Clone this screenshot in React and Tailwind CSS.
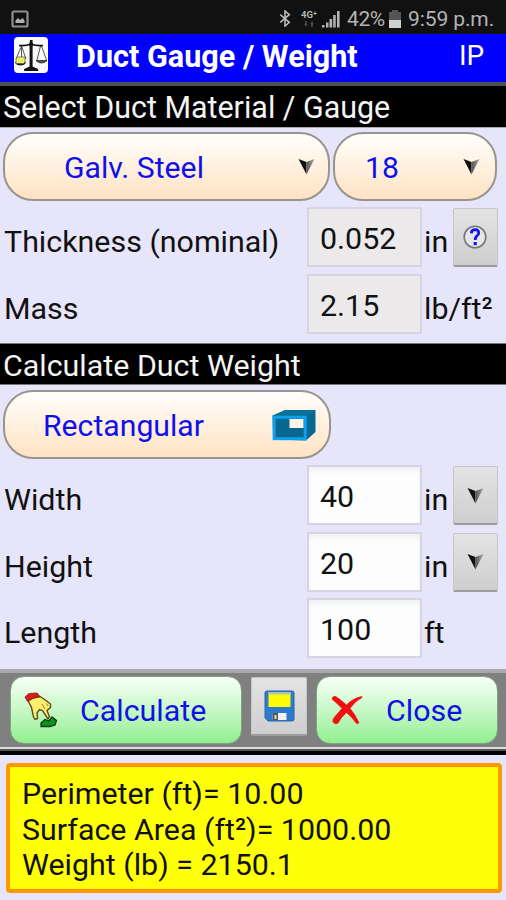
import React from "react";

function Chevron() {
  return (
    <svg className="block h-[17px] w-[17px]" viewBox="0 0 17 17">
      <defs>
        <linearGradient id="chev" x1="0" y1="0" x2="1" y2="0">
          <stop offset="0" stopColor="#555" />
          <stop offset="1" stopColor="#a8a8a8" />
        </linearGradient>
      </defs>
      <path d="M0.5 1 L8.5 4 V16.5 Z" fill="#111" />
      <path d="M16.5 1 L8.5 4 V16.5 Z" fill="url(#chev)" />
    </svg>
  );
}

function StatusBar() {
  return (
    <div className="flex h-[34px] shrink-0 items-center bg-[#111] pt-[3px] text-[#b4b4b4]">
      <svg className="ml-[11px] h-[18px] w-[18px]" viewBox="0 0 18 18">
        <rect x="1.5" y="1.5" width="15" height="15" rx="1.5" fill="#111" stroke="#8f8f8f" strokeWidth="2.2" />
        <path d="M4.5 13 V10.5 L7 8 L9 10 L11.5 8 L13.5 10.5 V13 Z" fill="#b0b0b0" />
      </svg>
      <svg className="ml-[250px] h-[17px] w-[12px]" viewBox="0 0 12 18" fill="none" stroke="#b8b8b8" strokeWidth="1.7">
        <path d="M1 5 L10.5 13 L6 17 V1 L10.5 5 L1 13" />
      </svg>
      <div className="ml-[9px] flex h-[18px] w-[18px] flex-col items-center">
        <span className="text-[9.5px] leading-[9px] font-bold">4G⁺</span>
        <svg className="mt-[2px] h-[6px] w-[10px]" viewBox="0 0 10 6" fill="#444">
          <path d="M0 3 L2 6 L4 3 H3 V0 H1 V3 Z M6 3 L8 0 L10 3 H9 V6 H7 V3 Z" />
        </svg>
      </div>
      <svg className="ml-[4px] h-[18px] w-[18px]" viewBox="0 0 18 18" fill="#b4b4b4">
        <path d="M0 15 h2.5 v2.5 h-2.5z M4 12.5 h2.5 v5 h-2.5z M7.5 9 h2.7 v8.5 h-2.7z M11.2 5 h2.5 v12.5 h-2.5z M15 1 h2.6 v16.5 h-2.6z" />
      </svg>
      <span className="ml-[7px] w-[40px] text-[21px] leading-6 tracking-[-0.4px] whitespace-nowrap">42%</span>
      <svg className="ml-[2px] h-[18px] w-[12px]" viewBox="0 0 12 18">
        <path d="M3 0 h6 v2 h3 v16 h-12 v-16 h3z" fill="#555" />
        <rect y="10" width="12" height="8" fill="#d0d0d0" />
      </svg>
      <span className="ml-[7px] text-[21px] leading-6 tracking-[-0.1px] whitespace-nowrap">9:59 p.m.</span>
    </div>
  );
}

function ScaleIcon() {
  return (
    <svg className="h-[36px] w-[34px]" viewBox="0 0 34 36">
      <rect width="34" height="36" rx="4" fill="#fafafa" />
      <g fill="none" stroke="#444" strokeWidth="0.9">
        <path d="M7.5 9 L2 22 M7.5 9 L12 22 M26.5 9 L23 23 M27.5 9 L32.5 23 M7.5 9 V20" />
      </g>
      <path d="M5 8.5 Q12 9 17 7 Q22 9 29 8.5" fill="none" stroke="#111" strokeWidth="1.6" />
      <path d="M16 3 h2.6 v3 l1 1.5 l-1 2 v20 l5.5 2.5 v2 h-14 v-2 l5.5 -2.5 v-20 l-1 -2 l1 -1.5z" fill="#111" />
      <path d="M22 23.5 H33 Q31 26 27.5 26 Q24 26 22 23.5Z" fill="#555" stroke="#222" strokeWidth="0.8" />
      <path d="M1 25 H12 Q11 28.5 6.5 28.5 Q2 28.5 1 25Z" fill="#222" />
      <path d="M2 21.5 L4 20 H11 V25 L9.5 26.5 H2 Z" fill="#f4ed62" stroke="#555" strokeWidth="0.7" />
    </svg>
  );
}

function Header() {
  return (
    <div className="flex h-[48px] shrink-0 items-start bg-[#0000fe] pt-[3px] text-white">
      <span className="ml-[14px]">
        <ScaleIcon />
      </span>
      <h1 className="ml-[28px] w-[383px] text-[30.6px] leading-[40px] font-bold whitespace-nowrap">
        Duct Gauge / Weight
      </h1>
      <span className="text-[28px] leading-[38px]">IP</span>
    </div>
  );
}

function Pill({ className, children }) {
  return (
    <button
      className={`flex h-[69px] items-center rounded-[30px] border-2 border-[#98948f] bg-linear-to-b from-[#fffefc] to-[#ffe3c2] text-[30.2px] text-[#0f0fee] ${className}`}
    >
      {children}
    </button>
  );
}

function SquareButton({ className = "h-[59px] w-[45px]", children }) {
  return (
    <button
      className={`flex items-center justify-center rounded-[2px] border border-b-2 border-[#c6c6c8] border-b-[#9b9b9d] bg-linear-to-b from-[#e4e4e4] to-[#cecece] ${className}`}
    >
      {children}
    </button>
  );
}

function Row({ label, value, unit, readOnly, children }) {
  return (
    <div className="flex h-[66.5px] items-start pl-[4px]">
      <span className="w-[303px] pt-[3px] leading-[64px] whitespace-nowrap">{label}</span>
      <span
        className={`h-[60px] w-[115px] border-2 border-[#d6d4e2] pl-[11px] leading-[60px] ${
          readOnly ? "bg-[#ebe9ea]" : "bg-[#fdfdfe] shadow-[inset_0_4px_4px_#f0f2f2]"
        }`}
      >
        {value}
      </span>
      <span className="ml-[2px] w-[29px] pt-[3px] leading-[64px] whitespace-nowrap">{unit}</span>
      {children && <span className="pt-px">{children}</span>}
    </div>
  );
}

function HelpIcon() {
  return (
    <svg className="mr-0.5 h-[24px] w-[24px]" viewBox="0 0 24 24">
      <circle cx="12" cy="12" r="10.8" fill="#e6e6ea" stroke="#777" strokeWidth="1.6" />
      <path d="M8.3 8.3 Q8.5 4.7 12.1 4.7 Q15.8 4.8 15.7 8 Q15.6 10 13.5 11.3 Q12.2 12.3 12.2 15" fill="none" stroke="#1111f0" strokeWidth="2.8" />
      <rect x="10.7" y="17" width="3" height="3.2" fill="#1111f0" />
    </svg>
  );
}

function DuctIcon() {
  return (
    <svg className="h-[32px] w-[44px]" viewBox="0 0 44 32">
      <path d="M0.5 6.5 L13 1 H43.5 V23 L34 31.5 L1 30.5 Z" fill="#08688f" />
      <path d="M1.5 7 L13 1.5 H43 L34 8 Z" fill="#087298" />
      <rect x="2.2" y="8.2" width="31" height="21.5" fill="#08688f" stroke="#0da0ef" strokeWidth="3" />
      <path d="M17.5 10 H31.5 V19 H17.5 Z" fill="#fff4e5" />
    </svg>
  );
}

function HandIcon() {
  return (
    <svg className="h-[36px] w-[34px]" viewBox="0 0 34 36">
      <path d="M17 31 L21 27.5 L25 29 L28 25 L32.5 28.5 L31 33 L26 34.5 H17 Z" fill="#0a9420" stroke="#153b10" strokeWidth="1.3" />
      <path
        d="M4 8.5 L9 6 L16 4.5 L22 8.5 L26.5 12 L26.5 15.5 L23 18.5 L25.5 25 L24 27 L18.5 18.5 L15.5 17.5 L13 21 L13.5 26.5 L11 27.5 L9.5 25 L7.5 15.5 Z"
        fill="#ffed6c"
        stroke="#5d4d16"
        strokeWidth="1.4"
      />
      <path d="M1 5 L5 1.5 L13 1 L16 4.5 L9 6 L3.5 9.5 Z" fill="#d51f1c" stroke="#8b1712" strokeWidth="0.8" />
      <path d="M18 12 L21 17 M22.5 11.5 L24 14" stroke="#9d8428" strokeWidth="1" />
    </svg>
  );
}

function FloppyIcon() {
  return (
    <svg className="mb-px h-[32px] w-[31px]" viewBox="0 0 31 32">
      <path d="M3 1 H28 Q30 1 30 3 V29 Q30 31 28 31 H4 L1 28 V3 Q1 1 3 1Z" fill="#2e7bcc" stroke="#2464b0" strokeWidth="1" />
      <rect x="4.5" y="2" width="22" height="15" fill="#fffa05" />
      <rect x="4.5" y="2" width="22" height="2.5" fill="#b6c2b0" />
      <rect x="8.5" y="23" width="14" height="7" fill="#f2f2f2" />
      <rect x="8.5" y="23" width="5.5" height="7" fill="#555" />
      <rect x="10.5" y="25" width="2" height="4" fill="#ddd" />
    </svg>
  );
}

function CrossIcon() {
  return (
    <svg className="h-[30px] w-[32px]" viewBox="0 0 32 30">
      <path
        d="M1 4 Q2 0 5.5 2 Q10 5 15.5 10 Q22 3 31 1.5 L30.5 3 Q24 6 19 13.5 Q24 19 28 28 L25.5 28.5 Q21 22 15.5 17.5 Q10 22 7 28 Q4 30 2 27 Q1 25 4 21.5 Q8 17 11 13.5 Q7 9 1 4Z"
        fill="#f00e0e"
        stroke="#f00e0e"
        strokeWidth="0.7"
      />
    </svg>
  );
}

function GreenButton({ className, children }) {
  return (
    <button
      className={`flex h-[68px] items-center rounded-[14px] border border-[#7fa47f] bg-linear-to-b from-[#f8fff8] to-[#91ef91] text-[30.4px] text-[#1111e6] ${className}`}
    >
      {children}
    </button>
  );
}

export default function App() {
  return (
    <div className="flex h-[900px] w-[506px] flex-col overflow-hidden bg-[#e6e5fa] font-['Roboto',sans-serif] text-[30.4px] text-[#111]">
      <StatusBar />
      <Header />
      <h2 className="h-[46px] shrink-0 border-t-4 border-b border-t-[#505050] border-b-[#aaa] bg-black pl-[3px] text-[30.45px] leading-[44px] text-[#f4f4f4]">
        Select Duct Material / Gauge
      </h2>
      <div className="flex h-[79px] shrink-0 gap-[3px] pt-[4px] pl-[3px]">
        <Pill className="w-[327px] justify-between pr-[13px] pl-[59px]">
          <span className="pt-0.5">Galv. Steel</span>
          <Chevron />
        </Pill>
        <Pill className="w-[164px] justify-between pr-[15px] pl-[30px]">
          <span className="pt-0.5">18</span>
          <Chevron />
        </Pill>
      </div>
      <div className="h-[136px] shrink-0">
        <Row label="Thickness (nominal)" value="0.052" unit="in" readOnly>
          <SquareButton>
            <HelpIcon />
          </SquareButton>
        </Row>
        <Row label="Mass" value="2.15" unit="lb/ft²" readOnly />
      </div>
      <h2 className="h-[42px] shrink-0 border-y border-y-[#777] bg-black pl-[3px] text-[30.4px] leading-[43px] text-[#f4f4f4]">
        Calculate Duct Weight
      </h2>
      <div className="h-[80px] shrink-0 pt-[5px] pl-[3px]">
        <Pill className="w-[328px] justify-between pr-[13px] pl-[38px]">
          <span className="pt-[3px]">Rectangular</span>
          <DuctIcon />
        </Pill>
      </div>
      <div className="h-[204px] shrink-0">
        <Row label="Width" value="40" unit="in">
          <SquareButton>
            <Chevron />
          </SquareButton>
        </Row>
        <Row label="Height" value="20" unit="in">
          <SquareButton>
            <Chevron />
          </SquareButton>
        </Row>
        <Row label="Length" value="100" unit="ft" />
      </div>
      <div className="flex h-[80px] shrink-0 items-start border-t-4 border-b-2 border-t-[#aaa] border-b-[#ddd] bg-[#808080] pt-[3px] pl-[10px]">
        <GreenButton className="w-[232px] pl-[13px]">
          <HandIcon />
          <span className="ml-[22px] pt-0.5">Calculate</span>
        </GreenButton>
        <SquareButton className="mt-px ml-[9px] h-[59px] w-[56px]">
          <FloppyIcon />
        </SquareButton>
        <GreenButton className="ml-[9px] w-[182px] pl-[14px]">
          <CrossIcon />
          <span className="ml-[23px] pt-0.5">Close</span>
        </GreenButton>
      </div>
      <div className="h-[6px] shrink-0 border-t-2 border-t-[#555] bg-black" />
      <div className="mt-[8px] ml-[6px] h-[130px] w-[496px] shrink-0 rounded-[4px] border-4 border-[#ff9800] bg-[#ffff08] pt-[9px] pl-[12px] leading-[35.6px]">
        <p>Perimeter (ft)= 10.00</p>
        <p>Surface Area (ft²)= 1000.00</p>
        <p>Weight (lb) = 2150.1</p>
      </div>
    </div>
  );
}
